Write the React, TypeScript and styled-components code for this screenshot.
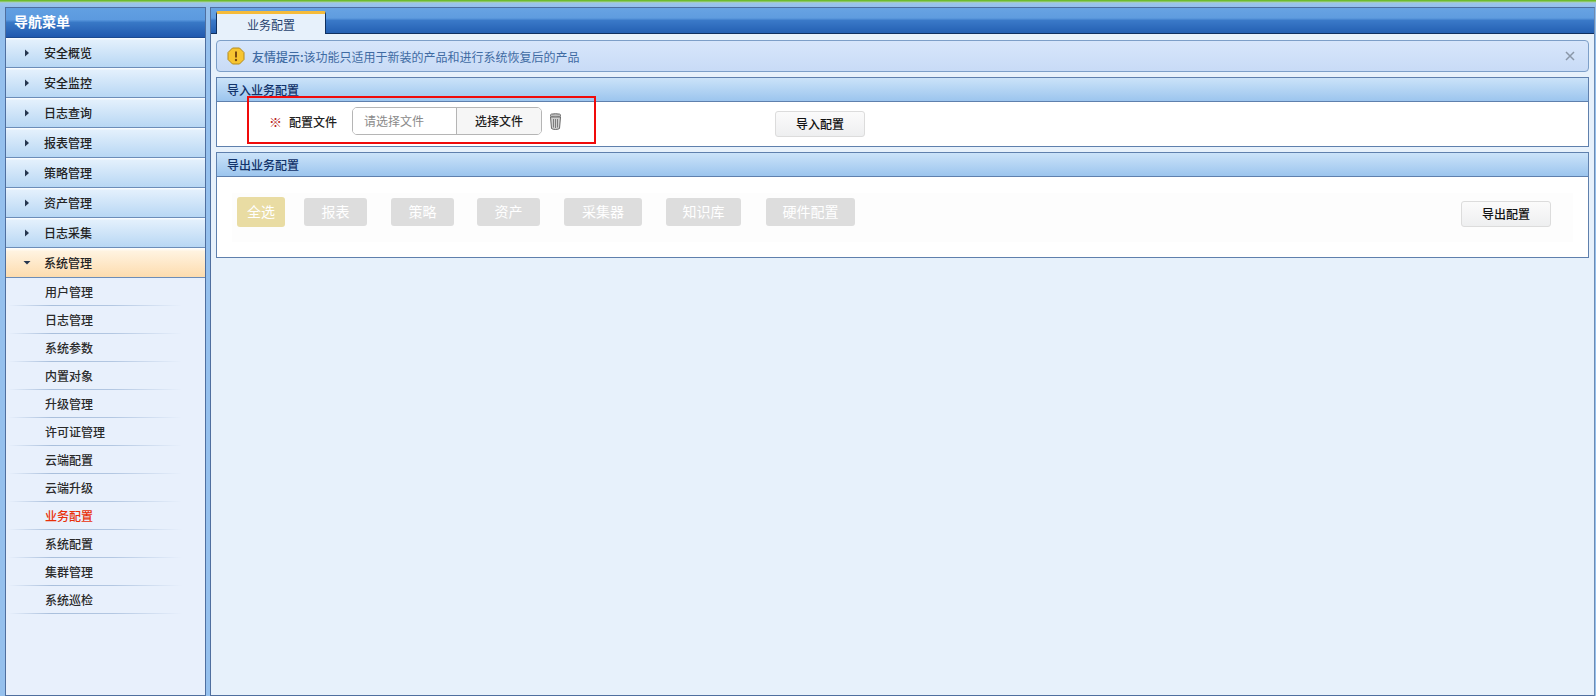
import React from "react";
import styled, { createGlobalStyle } from "styled-components";

const Global = createGlobalStyle`
  html, body { margin: 0; padding: 0; height: 100%; overflow: hidden; }
  body { font-family: "Noto Sans CJK SC", "Liberation Sans", sans-serif; font-size: 12px; background: #95c0ed; }
  #root { height: 100%; }
  * { box-sizing: border-box; }
`;

const Page = styled.div`
  width: 1596px; height: 696px; display: flex; flex-direction: column; position: relative;
`;
const TopLine = styled.div`
  height: 7px; flex: none;
  background: linear-gradient(#6dbb2c 0, #6dbb2c 1px, #a9d0a5 2px, #9cc5ea 3px, #95c0ed 100%);
`;
const Body = styled.div`
  flex: 1; display: flex; padding-left: 5px; gap: 4px; min-height: 0;
`;
const Side = styled.aside`
  width: 201px; flex: none; display: flex; flex-direction: column;
  border: 1px solid #4f6f9f; background: #e8f0fc;
`;
const SideHead = styled.div`
  height: 30px; flex: none; padding: 0 0 2px 8px; color: #fff; font-size: 14px; font-weight: 700; line-height: 27px;
  background: linear-gradient(#62a0e2 0, #5c9adf 40%, #3878c6 50%, #2259ae 100%);
  border-bottom: 1px solid #1c4a90;
`;
const MenuItem = styled.div<{ $active?: boolean }>`
  height: 30px; flex: none; display: flex; align-items: center; padding-left: 17px; gap: 13px;
  color: #222; font-size: 12px; font-weight: 500;
  border-bottom: 1px solid #6c8db8;
  background: ${(p) =>
    p.$active
      ? "linear-gradient(#ffffff 0, #fff3e0 12%, #fddcae 100%)"
      : "linear-gradient(#ffffff 0, #e3f0fc 8%, #b8d7f4 100%)"};
`;
const Arrow = styled.svg`
  width: 8px; height: 8px; flex: none; fill: #26364f;
`;
const SubItem = styled.div<{ $current?: boolean }>`
  height: 28px; flex: none; padding-left: 39px; line-height: 27px; position: relative; font-size: 12px; font-weight: 500;
  color: ${(p) => (p.$current ? "#e8300a" : "#2a2a2a")};
  &::after {
    content: ""; position: absolute; left: 2px; bottom: 0; width: 174px; height: 1px;
    background: linear-gradient(90deg, #e8f0fc 0, #a9bfdc 25%, #b3c7e2 60%, #e8f0fc 100%);
  }
`;
const Main = styled.main`
  width: 1385px; flex: none; display: flex; flex-direction: column; border: 1px solid #4f6f9f; border-right-color: #6d8bb2; background: #e7f1fb;
`;
const TabBar = styled.div`
  height: 26px; flex: none; padding: 3px 0 0 5px; display: flex;
  background: linear-gradient(#68a3e3 0, #5f9cdf 40%, #3a79c8 50%, #2460b3 100%);
  border-bottom: 1px solid #10305f;
`;
const Tab = styled.div`
  width: 110px; height: 23px; text-align: center; color: #28436e; font-size: 12px; line-height: 22px;
  background: #e7f1fb; border: 1px solid #10305f; border-bottom: none; border-top: 3px solid #f5bb3a; border-radius: 2px 2px 0 0;
`;
const Content = styled.div`
  flex: 1; display: flex; flex-direction: column; padding: 6px 5px 0 5px;
`;
const Alert = styled.div`
  height: 32px; flex: none; display: flex; align-items: center; padding: 0 13px 0 10px;
  border: 1px solid #7d9fc8; border-radius: 4px; color: #3f6ba3; font-size: 12px;
  background: linear-gradient(#d7e6fb, #c8dbf6);
`;
const AlertIcon = styled.svg`
  width: 18px; height: 18px; flex: none; margin-right: 7px;
`;
const AlertLabel = styled.span`
  font-weight: 500; font-size: 12px;
`;
const AlertText = styled.span`
  flex: 1;
`;
const CloseIcon = styled.svg`
  width: 10px; height: 10px; stroke: #8a97a8; stroke-width: 1.5; flex: none;
`;
const Panel = styled.section<{ $h: number }>`
  height: ${(p) => p.$h}px; flex: none; margin-top: 5px; display: flex; flex-direction: column;
  border: 1px solid #5f80ad; background: #fff;
`;
const PanelHead = styled.div`
  height: 24px; flex: none; padding-left: 10px; line-height: 23px; color: #12336a; font-size: 12px; font-weight: 500;
  background: linear-gradient(#cbe3f9, #9cc5ee); border-bottom: 1px solid #5f80ad;
`;
const ImportRow = styled.div`
  flex: 1; display: flex; align-items: flex-start; padding: 5px 0 0 52px;
`;
const Field = styled.div`
  display: flex; align-items: center;
`;
const Required = styled.span`
  color: #b8261c; font-size: 13px; font-weight: 700; width: 20px;
`;
const FieldLabel = styled.span`
  color: #222; font-weight: 500; width: 63px; font-size: 12px;
`;
const FileBox = styled.div`
  width: 190px; height: 28px; display: flex; border: 1px solid #b5b5b5; border-radius: 5px; overflow: hidden;
`;
const FilePlaceholder = styled.div`
  width: 104px; padding-left: 11px; line-height: 25px; color: #8a8a8a; font-size: 12px; background: #fff; border-right: 1px solid #b5b5b5;
`;
const FileButton = styled.div`
  flex: 1; text-align: center; line-height: 25px; color: #222; font-weight: 500; font-size: 12px; background: #f6f6f6;
`;
const Trash = styled.svg`
  width: 13px; height: 17px; margin-left: 7px; flex: none;
`;
const ActionButton = styled.div`
  width: 90px; height: 26px; text-align: center; line-height: 24px; color: #111; font-size: 12px; font-weight: 500;
  border: 1px solid #dcdcdc; border-radius: 3px; background: linear-gradient(#fbfbfb, #eeeff0);
`;
const ImportAction = styled(ActionButton)`
  margin: 4px 0 0 213px;
`;
const ExportBand = styled.div`
  height: 49px; margin: 16px 15px 0 15px; padding: 4px 22px 0 5px; display: flex; align-items: flex-start; background: #fdfdfd;
`;
const Chip = styled.div<{ $w: number; $gap: number; $on?: boolean }>`
  width: ${(p) => p.$w}px; height: ${(p) => (p.$on ? 30 : 28)}px; margin-left: ${(p) => p.$gap}px; margin-top: ${(p) => (p.$on ? 0 : 1)}px;
  flex: none; text-align: center; line-height: ${(p) => (p.$on ? 28 : 26)}px; color: #fff; font-size: 14px;
  border-radius: 3px; background: ${(p) => (p.$on ? "#e9dca3" : "#dddddd")};
`;
const Spacer = styled.div`
  flex: 1;
`;
const ExportAction = styled(ActionButton)`
  margin-top: 4px;
`;
const Highlight = styled.div`
  position: absolute; left: 247px; top: 96px; width: 349px; height: 48px; border: 2px solid #f00a0a; pointer-events: none;
`;

const menuTop = ["安全概览", "安全监控", "日志查询", "报表管理", "策略管理", "资产管理", "日志采集"];
const subs = ["用户管理", "日志管理", "系统参数", "内置对象", "升级管理", "许可证管理", "云端配置", "云端升级", "业务配置", "系统配置", "集群管理", "系统巡检"];
const chips: [string, number, number][] = [
  ["报表", 63, 19], ["策略", 63, 24], ["资产", 63, 23], ["采集器", 78, 24], ["知识库", 75, 24], ["硬件配置", 89, 25],
];

export default function App() {
  return (
    <Page>
      <Global />
      <TopLine />
      <Body>
        <Side>
          <SideHead>导航菜单</SideHead>
          {menuTop.map((m) => (
            <MenuItem key={m}>
              <Arrow viewBox="0 0 8 8"><path d="M2 0.500l4 3.500-4 3.500z" /></Arrow>
              {m}
            </MenuItem>
          ))}
          <MenuItem $active>
            <Arrow viewBox="0 0 8 8"><path d="M0.500 2h7L4 5.500z" /></Arrow>
            系统管理
          </MenuItem>
          {subs.map((s) => (
            <SubItem key={s} $current={s === "业务配置"}>{s}</SubItem>
          ))}
        </Side>
        <Main>
          <TabBar><Tab>业务配置</Tab></TabBar>
          <Content>
            <Alert>
              <AlertIcon viewBox="0 0 18 18">
                <path d="M5.500 1h7L17 5.500v7L12.500 17h-7L1 12.500v-7z" fill="#f7c531" stroke="#b58a1c" />
                <path d="M9 4.500v6" stroke="#7a4a10" strokeWidth="2" />
                <circle cx="9" cy="13" r="1.200" fill="#7a4a10" />
              </AlertIcon>
              <AlertLabel>友情提示:</AlertLabel>
              <AlertText>该功能只适用于新装的产品和进行系统恢复后的产品</AlertText>
              <CloseIcon viewBox="0 0 10 10"><path d="M1 1l8 8M9 1l-8 8" /></CloseIcon>
            </Alert>
            <Panel $h={70}>
              <PanelHead>导入业务配置</PanelHead>
              <ImportRow>
                <Field>
                  <Required>※</Required>
                  <FieldLabel>配置文件</FieldLabel>
                  <FileBox>
                    <FilePlaceholder>请选择文件</FilePlaceholder>
                    <FileButton>选择文件</FileButton>
                  </FileBox>
                  <Trash viewBox="0 0 13 17">
                    <ellipse cx="6.500" cy="2.500" rx="5.500" ry="1.800" fill="#bdbdbd" stroke="#6a6a6a" />
                    <path d="M1.500 4l1 11.500c1.500 1.300 6.500 1.300 8 0l1-11.500z" fill="#d0d0d0" stroke="#6a6a6a" />
                    <path d="M4.500 6v8.500M6.500 6v9M8.500 6v8.500" stroke="#7c7c7c" />
                  </Trash>
                </Field>
                <ImportAction>导入配置</ImportAction>
              </ImportRow>
            </Panel>
            <Panel $h={106}>
              <PanelHead>导出业务配置</PanelHead>
              <ExportBand>
                <Chip $w={48} $gap={0} $on>全选</Chip>
                {chips.map(([t, w, g]) => (
                  <Chip key={t} $w={w} $gap={g}>{t}</Chip>
                ))}
                <Spacer />
                <ExportAction>导出配置</ExportAction>
              </ExportBand>
            </Panel>
          </Content>
        </Main>
      </Body>
      <Highlight />
    </Page>
  );
}
